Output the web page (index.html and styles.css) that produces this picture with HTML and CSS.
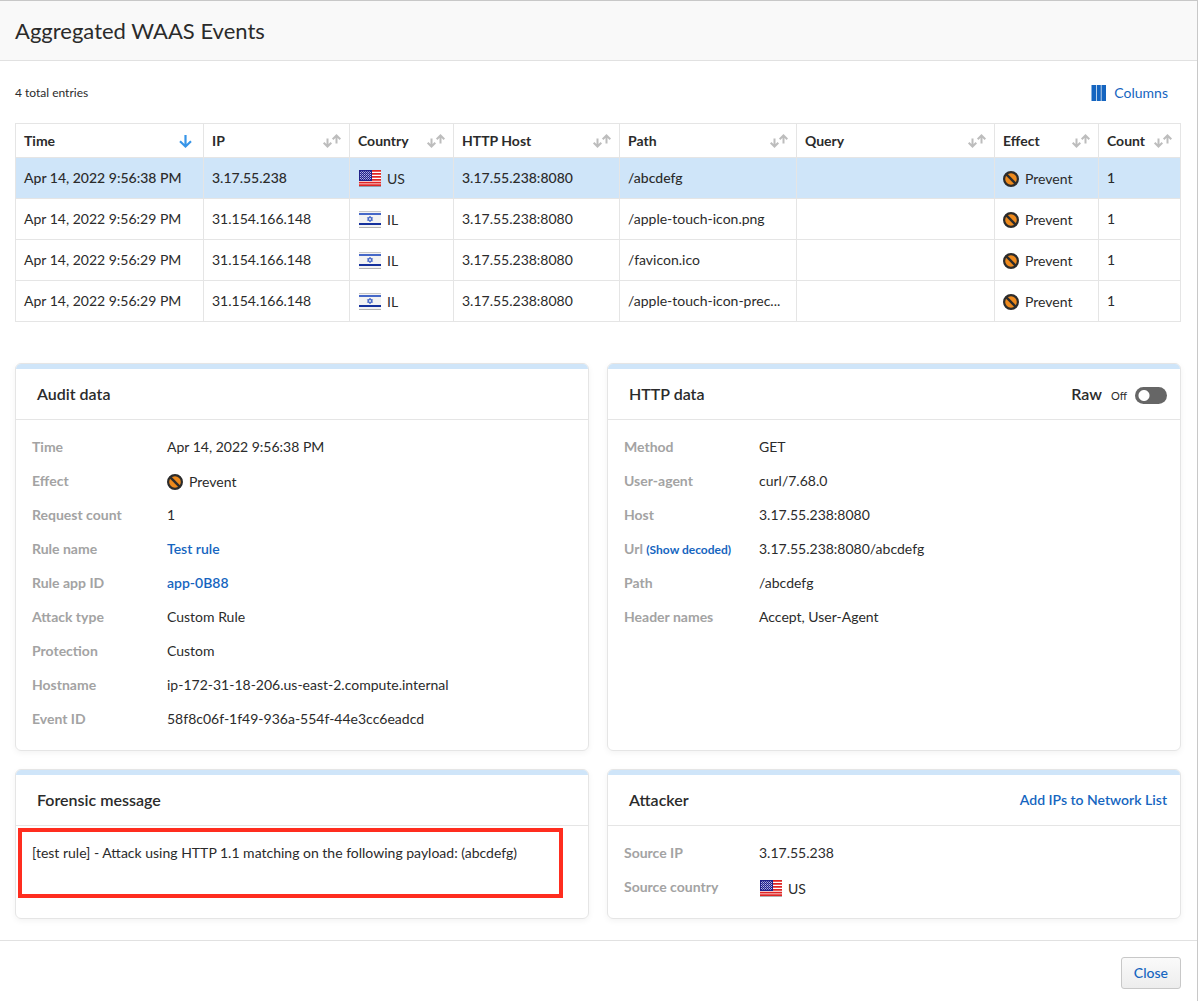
FILE: index.html
```html
<!DOCTYPE html>
<html lang="en">
<head>
<meta charset="utf-8">
<title>Aggregated WAAS Events</title>
<link rel="stylesheet" href="styles.css">
</head>
<body>
<svg class="sprite" aria-hidden="true">
  <symbol id="sort" viewBox="0 0 20 16">
    <g fill="none" stroke="currentColor" stroke-width="2">
      <path d="M6.500 5.500v8M2.700 9.700l3.800 3.800 3.800-3.800"/>
      <path d="M15.500 10.500v-8M11.700 6.300l3.800-3.800 3.800 3.800"/>
    </g>
  </symbol>
  <symbol id="down" viewBox="0 0 14 14">
    <path d="M7.500 1v11.500M2 7.300l5.500 5.200L13 7.300" fill="none" stroke="currentColor" stroke-width="2.200"/>
  </symbol>
  <symbol id="columns" viewBox="0 0 15 16">
    <path d="M.5 0H5v16H.5zM5.700 0h4.100v16H5.700zM10.500 0H15v16h-4.500z" fill="currentColor"/>
  </symbol>
  <symbol id="prevent" viewBox="0 0 16 16">
    <circle cx="8" cy="8" r="6.900" fill="#ee8a1d" stroke="#2c2c2c" stroke-width="2.200"/>
    <path d="M3.200 3.200l9.600 9.600" stroke="#2c2c2c" stroke-width="2.400"/>
  </symbol>
  <symbol id="us" viewBox="0 0 24 18">
    <rect x="1" y="1.500" width="22" height="15.500" fill="#000" opacity=".3"/>
    <rect x="1" y="0" width="22" height="16" fill="#fff"/>
    <path d="M1 .8h22M1 3.800h22M1 6.800h22M1 9.800h22M1 12.600h22M1 15.200h22" stroke="#e02424" stroke-width="1.700"/>
    <rect x="1" y="0" width="13" height="11" fill="#22228a"/>
    <path d="M2 2.500h11M2 4.500h11M2 6.500h11M2 8.500h11" stroke="#b4b4e6" stroke-width="1" stroke-dasharray="1 1"/>
    <path d="M3 1.500h10M3 3.500h10M3 5.500h10M3 7.500h10M3 9.500h10" stroke="#8080c8" stroke-width="1" stroke-dasharray="1 1"/>
  </symbol>
  <symbol id="il" viewBox="0 0 24 18">
    <rect x="1" y="1.500" width="22" height="15.500" fill="#000" opacity=".3"/>
    <rect x="1" y="0" width="22" height="16" fill="#f3f3f3"/>
    <path d="M1 .5h22" stroke="#c8c8c8"/>
    <path d="M1 3h22" stroke="#4668c8" stroke-width="2"/>
    <path d="M1 13h22" stroke="#14309c" stroke-width="2"/>
    <path d="M12 5.200l2.500 4.100H9.500zM12 10.800l-2.500-4.100h5z" fill="none" stroke="#4668c8" stroke-width="1"/>
  </symbol>
</svg>
<div class="dialog">
  <header class="dialog-header"><h1>Aggregated WAAS Events</h1></header>
  <main class="content">
    <div class="toolbar">
      <span class="total">4 total entries</span>
      <button type="button" class="link-button"><svg class="icon-columns"><use href="#columns"/></svg>Columns</button>
    </div>
    <table class="events">
      <colgroup><col class="c-time"><col class="c-ip"><col class="c-country"><col class="c-host"><col class="c-path"><col><col class="c-effect"><col class="c-count"></colgroup>
      <thead>
        <tr>
          <th scope="col"><div class="head">Time<svg class="icon-down"><use href="#down"/></svg></div></th>
          <th scope="col"><div class="head">IP<svg class="icon-sort"><use href="#sort"/></svg></div></th>
          <th scope="col"><div class="head">Country<svg class="icon-sort"><use href="#sort"/></svg></div></th>
          <th scope="col"><div class="head">HTTP Host<svg class="icon-sort"><use href="#sort"/></svg></div></th>
          <th scope="col"><div class="head">Path<svg class="icon-sort"><use href="#sort"/></svg></div></th>
          <th scope="col"><div class="head">Query<svg class="icon-sort"><use href="#sort"/></svg></div></th>
          <th scope="col"><div class="head">Effect<svg class="icon-sort"><use href="#sort"/></svg></div></th>
          <th scope="col"><div class="head">Count<svg class="icon-sort"><use href="#sort"/></svg></div></th>
        </tr>
      </thead>
      <tbody>
        <tr class="selected">
          <td>Apr 14, 2022 9:56:38 PM</td><td>3.17.55.238</td>
          <td><span class="with-icon with-flag"><svg class="flag"><use href="#us"/></svg>US</span></td>
          <td>3.17.55.238:8080</td><td>/abcdefg</td><td></td>
          <td><span class="with-icon"><svg class="icon-effect"><use href="#prevent"/></svg>Prevent</span></td><td>1</td>
        </tr>
        <tr>
          <td>Apr 14, 2022 9:56:29 PM</td><td>31.154.166.148</td>
          <td><span class="with-icon with-flag"><svg class="flag"><use href="#il"/></svg>IL</span></td>
          <td>3.17.55.238:8080</td><td>/apple-touch-icon.png</td><td></td>
          <td><span class="with-icon"><svg class="icon-effect"><use href="#prevent"/></svg>Prevent</span></td><td>1</td>
        </tr>
        <tr>
          <td>Apr 14, 2022 9:56:29 PM</td><td>31.154.166.148</td>
          <td><span class="with-icon with-flag"><svg class="flag"><use href="#il"/></svg>IL</span></td>
          <td>3.17.55.238:8080</td><td>/favicon.ico</td><td></td>
          <td><span class="with-icon"><svg class="icon-effect"><use href="#prevent"/></svg>Prevent</span></td><td>1</td>
        </tr>
        <tr>
          <td>Apr 14, 2022 9:56:29 PM</td><td>31.154.166.148</td>
          <td><span class="with-icon with-flag"><svg class="flag"><use href="#il"/></svg>IL</span></td>
          <td>3.17.55.238:8080</td><td>/apple-touch-icon-prec...</td><td></td>
          <td><span class="with-icon"><svg class="icon-effect"><use href="#prevent"/></svg>Prevent</span></td><td>1</td>
        </tr>
      </tbody>
    </table>
    <div class="cards">
      <section class="card">
        <div class="card-header"><h2>Audit data</h2></div>
        <dl class="fields">
          <dt>Time</dt><dd>Apr 14, 2022 9:56:38 PM</dd>
          <dt>Effect</dt><dd><span class="with-icon"><svg class="icon-effect"><use href="#prevent"/></svg>Prevent</span></dd>
          <dt>Request count</dt><dd>1</dd>
          <dt>Rule name</dt><dd><a href="#">Test rule</a></dd>
          <dt>Rule app ID</dt><dd><a href="#">app-0B88</a></dd>
          <dt>Attack type</dt><dd>Custom Rule</dd>
          <dt>Protection</dt><dd>Custom</dd>
          <dt>Hostname</dt><dd>ip-172-31-18-206.us-east-2.compute.internal</dd>
          <dt>Event ID</dt><dd>58f8c06f-1f49-936a-554f-44e3cc6eadcd</dd>
        </dl>
      </section>
      <section class="card">
        <div class="card-header">
          <h2>HTTP data</h2>
          <label class="raw"><span class="raw-label">Raw</span><span class="raw-state">Off<input type="checkbox" role="switch" class="switch"></span></label>
        </div>
        <dl class="fields">
          <dt>Method</dt><dd>GET</dd>
          <dt>User-agent</dt><dd>curl/7.68.0</dd>
          <dt>Host</dt><dd>3.17.55.238:8080</dd>
          <dt>Url <a href="#" class="decode">(Show decoded)</a></dt><dd>3.17.55.238:8080/abcdefg</dd>
          <dt>Path</dt><dd>/abcdefg</dd>
          <dt>Header names</dt><dd>Accept, User-Agent</dd>
        </dl>
      </section>
      <section class="card">
        <div class="card-header"><h2>Forensic message</h2></div>
        <p class="message">[test rule] - Attack using HTTP 1.1 matching on the following payload: (abcdefg)</p>
        <div class="highlight"></div>
      </section>
      <section class="card">
        <div class="card-header"><h2>Attacker</h2><a href="#">Add IPs to Network List</a></div>
        <dl class="fields">
          <dt>Source IP</dt><dd>3.17.55.238</dd>
          <dt>Source country</dt><dd><span class="with-icon with-flag"><svg class="flag"><use href="#us"/></svg>US</span></dd>
        </dl>
      </section>
    </div>
  </main>
  <footer class="dialog-footer"><button type="button" class="close">Close</button></footer>
</div>
</body>
</html>
```
FILE: styles.css
```css
* { box-sizing: border-box; }

body {
  margin: 0;
  background: #fff;
  color: #2b2b2b;
  font: 14px/20px Lato, "Open Sans", sans-serif;
}

h1, h2, p, dl, dd { margin: 0; }

a, .link-button { color: #1565c0; text-decoration: none; }
a { font-weight: 600; }

.sprite { position: absolute; width: 0; height: 0; }

.dialog {
  min-height: 100vh;
  border-top: 1px solid #c8c8c8;
  border-right: 1px solid #c8c8c8;
}

.dialog-header {
  padding: 14px 15px 13px;
  background: #f9f9f9;
  border-bottom: 1px solid #e1e1e1;
}
h1 { font-size: 22px; line-height: 32px; font-weight: 400; }

.content { padding: 20px 16px 21px 15px; }

.toolbar {
  display: flex;
  align-items: center;
  justify-content: space-between;
  height: 24px;
  margin-bottom: 18px;
  padding-right: 13px;
}
.total { font-size: 12px; }
.link-button {
  display: flex;
  align-items: center;
  gap: 8px;
  padding: 0;
  border: 0;
  background: none;
  font: inherit;
  cursor: pointer;
}
.icon-columns { width: 15px; height: 16px; }

.events {
  width: 100%;
  table-layout: fixed;
  border-collapse: collapse;
}
.events th, .events td {
  padding: 0 8px;
  border: 1px solid #e5e5e5;
  text-align: left;
  white-space: nowrap;
}
.events th { height: 34px; font-weight: 700; }
.events td { height: 41px; }
.selected { background: #cfe5f9; }
.events .selected td { font-weight: 500; }

.c-time { width: 188px; }
.c-ip { width: 146px; }
.c-country { width: 104px; }
.c-host { width: 166px; }
.c-path { width: 177px; }
.c-effect { width: 104px; }
.c-count { width: 82px; }

.head { display: flex; align-items: center; justify-content: space-between; }
.icon-sort { width: 20px; height: 16px; color: #bdbdbd; }
.icon-down { width: 14px; height: 14px; margin-right: 3px; color: #3795e8; }

.with-icon { display: flex; align-items: center; gap: 6px; padding-top: 2px; font-weight: 400; }
.with-flag { gap: 5px; }
.flag { width: 24px; height: 18px; }
.icon-effect { width: 16px; height: 16px; }

.cards {
  display: grid;
  grid-template-columns: 1fr 1fr;
  gap: 18px;
  margin-top: 41px;
}
.card {
  position: relative;
  overflow: hidden;
  border: 1px solid #e5e5e5;
  border-radius: 6px;
  box-shadow: 0 2px 6px rgba(0, 0, 0, .05);
}
.card-header {
  display: flex;
  align-items: center;
  justify-content: space-between;
  height: 56px;
  padding: 0 13px 0 21px;
  border-top: 5px solid #cfe5f9;
  border-bottom: 1px solid #e5e5e5;
}
h2, .raw-label { font-size: 16px; font-weight: 600; }
.raw { display: flex; align-items: center; gap: 9px; }
.raw-state { display: flex; align-items: center; gap: 8px; padding-top: 3px; font-size: 11px; }
.switch {
  appearance: none;
  width: 32px;
  height: 17px;
  margin: 0;
  border-radius: 9px;
  background: radial-gradient(circle at 9px 50%, #fff 5px, transparent 6px) #666;
}

.fields {
  display: grid;
  grid-template-columns: 135px 1fr;
  grid-auto-rows: 34px;
  align-items: center;
  padding: 10px 16px 14px;
}
.fields dt { color: #a3a3a3; font-weight: 700; white-space: nowrap; }
.fields .with-flag { padding-top: 4px; }
.decode { font-size: 12px; font-weight: 700; }

.message { padding: 17px 16px; }
.highlight {
  position: absolute;
  top: 58px;
  left: 2px;
  right: 25px;
  height: 70px;
  border: 4px solid #ff2d1f;
}

.dialog-footer {
  display: flex;
  justify-content: flex-end;
  padding: 16px 16px 12px;
  border-top: 1px solid #e1e1e1;
}
.close {
  height: 32px;
  padding: 0 12px;
  border: 1px solid #c8c8c8;
  border-radius: 3px;
  background: linear-gradient(#fafafa, #ededed);
  color: #1565c0;
  font: inherit;
  font-weight: 500;
}
```
